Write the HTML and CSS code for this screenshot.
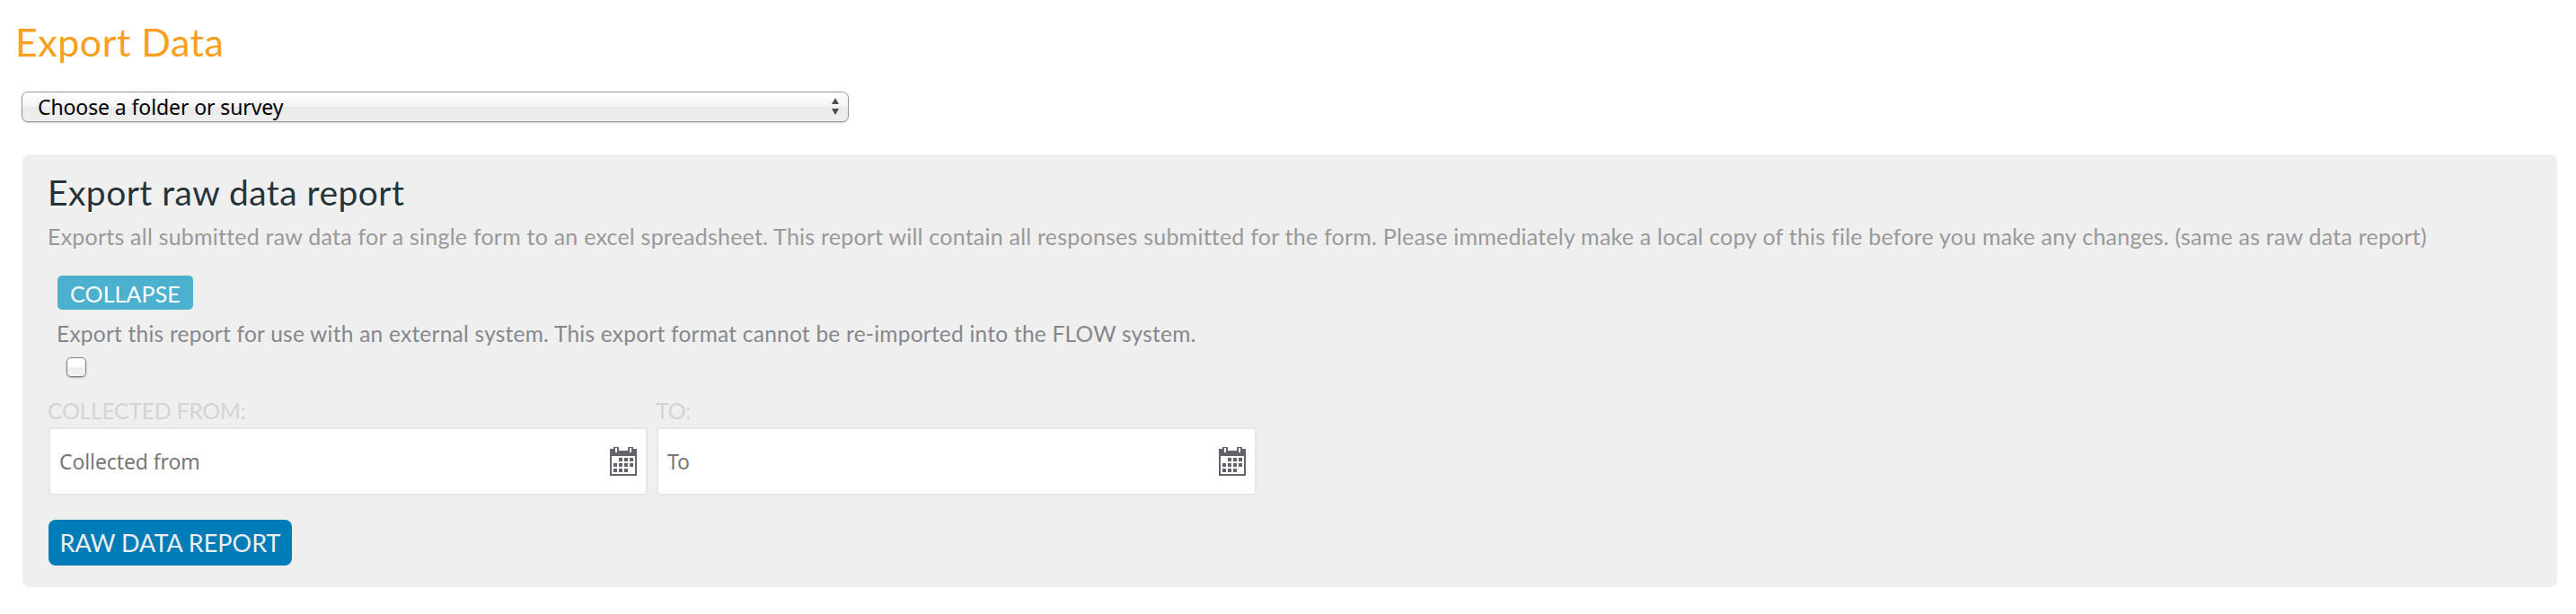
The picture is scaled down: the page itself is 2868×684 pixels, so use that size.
FILE: index.html
```
<!DOCTYPE html>
<html lang="en">
<head>
<meta charset="utf-8">
<title>Export Data</title>
<link rel="stylesheet" href="styles.css">
</head>
<body>
<h1 class="page-title">Export Data</h1>
<div class="select"><span>Choose a folder or survey</span>
<svg class="arrows" width="8" height="19" viewBox="0 0 8 19"><path d="M4 0L8 7H0zM4 19L0 12H8z"/></svg></div>
<section class="panel">
<h2 class="panel-title">Export raw data report</h2>
<p class="desc">Exports all submitted raw data for a single form to an excel spreadsheet. This report will contain all responses submitted for the form. Please immediately make a local copy of this file before you make any changes. (same as raw data report)</p>
<div class="options">
<button class="collapse">COLLAPSE</button>
<p class="hint">Export this report for use with an external system. This export format cannot be re-imported into the FLOW system.</p>
<div class="checkbox"></div>
</div>
<div class="fields">
<div class="field"><label class="label">COLLECTED FROM:</label><div class="input"><span>Collected from</span><svg class="cal" width="30" height="32" viewBox="0 0 30 32"><use href="#cal"/></svg></div></div>
<div class="field"><label class="label">TO:</label><div class="input"><span>To</span><svg class="cal" width="30" height="32" viewBox="0 0 30 32"><use href="#cal"/></svg></div></div>
</div>
<button class="submit">RAW DATA REPORT</button>
</section>
<svg width="0" height="0" class="defs"><defs><g id="cal"><path fill="#62656e" fill-rule="evenodd" d="M0 2H4V0H10V4H20V0H26V2H30V32H0zM2 10V30H28V10zM6 1V6H8V1zM22 1V6H24V1z"/><path fill="#62656e" d="M10 12h4v4h-4zM16 12h4v4h-4zM22 12h4v4h-4zM4 18h4v4h-4zM10 18h4v4h-4zM16 18h4v4h-4zM22 18h4v4h-4zM4 24h4v4h-4zM10 24h4v4h-4zM16 24h4v4h-4z"/></g></defs></svg>
</body>
</html>
```
FILE: styles.css
```
body{margin:0;background:#fff;font-family:Lato,sans-serif;width:2868px;height:684px;overflow:hidden}
h1,h2,p{margin:0;font-weight:400;white-space:nowrap}
button{border:0;padding:0;font-family:inherit;display:block;white-space:nowrap}
.page-title{margin:19px 0 0 17px;font-size:43px;line-height:56px;letter-spacing:.5px;color:#faa01e}
.select{margin:27px 0 0 24px;box-sizing:border-box;width:921px;height:34px;border:1px solid #999;border-radius:7px;background:linear-gradient(#fff,#f4f4f4 50%,#e9e9e9 51%,#efefef);box-shadow:0 1px 2px #0003;display:flex;align-items:center;justify-content:space-between;padding:0 10px 1px 17px;font-family:"Noto Sans",sans-serif;font-size:23px;letter-spacing:-.1px;color:#000}
.arrows{fill:#4d4d4d}
.panel{margin:36px 0 0 25px;width:2822px;height:482px;box-sizing:border-box;padding:16px 29px 0;border-radius:8px;background:#efefef}
.panel-title{margin-left:-1px;font-size:39px;line-height:52px;letter-spacing:.45px;color:#26343a;text-shadow:0 2px 0 #fff}
.desc{margin:6px 0 0 -1px;font-size:25px;line-height:34px;letter-spacing:.22px;color:#999}
.options{padding-left:10px}
.collapse{margin-top:27px;width:151px;height:38px;border-radius:5px;background:#4bb1cf;color:#fff;font-size:25px;line-height:40px;letter-spacing:.1px}
.hint{margin:11px 0 0 -1px;font-size:24.5px;line-height:32px;letter-spacing:.233px;color:#86878c}
.checkbox{margin:10px 0 0 10px;box-sizing:border-box;width:22px;height:22px;border:1px solid #808080;border-radius:5px;background:linear-gradient(#fff 45%,#eee 55%,#f3f3f3);box-shadow:0 1px 2px #0004}
.fields{display:flex;gap:10px;margin-top:20px}
.field{width:667px}
.field + .field{width:668px}
.label{display:block;margin-left:-1px;padding-bottom:2px;font-size:25px;line-height:34px;letter-spacing:-.4px;color:#d4d4d4}
.input{box-sizing:border-box;height:76px;border:2px solid #e7e7e7;border-radius:4px;background:#fff;display:flex;align-items:center;justify-content:space-between;padding:0 10px;font-family:"Noto Sans",sans-serif;font-size:23px;letter-spacing:-.1px;color:#777}
.submit{margin-top:27px;width:271px;height:51px;border-radius:8px;background:#007cb8;color:#eee;font-size:27px;line-height:51px}
.defs{position:absolute}
```
